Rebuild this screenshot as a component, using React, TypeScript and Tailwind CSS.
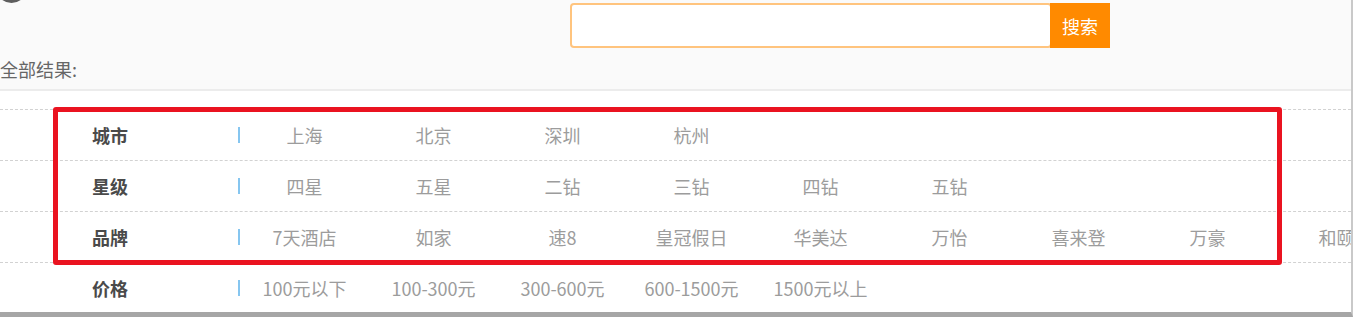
import React from "react";

const rows = [
  { label: "城市", items: ["上海", "北京", "深圳", "杭州"] },
  { label: "星级", items: ["四星", "五星", "二钻", "三钻", "四钻", "五钻"] },
  {
    label: "品牌",
    items: ["7天酒店", "如家", "速8", "皇冠假日", "华美达", "万怡", "喜来登", "万豪", "和颐"],
  },
  { label: "价格", items: ["100元以下", "100-300元", "300-600元", "600-1500元", "1500元以上"] },
];

function FilterRow({ label, items }: { label: string; items: string[] }) {
  return (
    <div className="flex items-center h-[51px] border-t border-dashed border-[#d2d2d2] pl-[92px]">
      <span className="w-[146px] shrink-0 text-[18px] font-bold text-[#4a4a4a]">{label}</span>
      <span className="w-[2px] h-[16px] shrink-0 bg-[#86c6f0]" />
      {items.map((it) => (
        <span key={it} className="w-[129px] shrink-0 text-center text-[18px] text-[#9c9c9c] whitespace-nowrap">
          {it}
        </span>
      ))}
    </div>
  );
}

export default function App() {
  return (
    <div
      className="w-[1362px] h-[317px] bg-white overflow-hidden"
      style={{ fontFamily: '"Noto Sans CJK SC", "Noto Sans", sans-serif' }}
    >
      <div className="relative w-[1353px] h-[317px] overflow-hidden border-r-2 border-b-[5px] border-[#c9c9c9] border-b-[#a6a6a6] bg-white">
        {/* header */}
        <div className="relative h-[91px] bg-[#fafafa] border-b-2 border-[#ececec]">
          <div className="absolute -left-[4px] -top-[28px] w-[31px] h-[31px] rounded-full border-[3px] border-[#5e5e5e]" />
          <div className="flex pt-[3px] pl-[570px]">
            <div className="w-[482px] h-[45px] bg-white border-2 border-[#ffc47e] rounded-[4px]" />
            <button className="-ml-[2px] w-[60px] h-[45px] bg-[#ff8a00] text-white text-[18px] leading-none">
              搜索
            </button>
          </div>
          <div className="mt-[9px] text-[18px] leading-[24px] text-[#666]">全部结果:</div>
        </div>

        {/* filters */}
        <div className="pt-[18px]">
          {rows.map((r) => (
            <FilterRow key={r.label} label={r.label} items={r.items} />
          ))}
        </div>

        {/* annotation box */}
        <div className="absolute left-[53px] top-[107px] w-[1229px] h-[158px] border-[5px] border-[#ea1320] rounded-[3px]" />
      </div>
    </div>
  );
}
